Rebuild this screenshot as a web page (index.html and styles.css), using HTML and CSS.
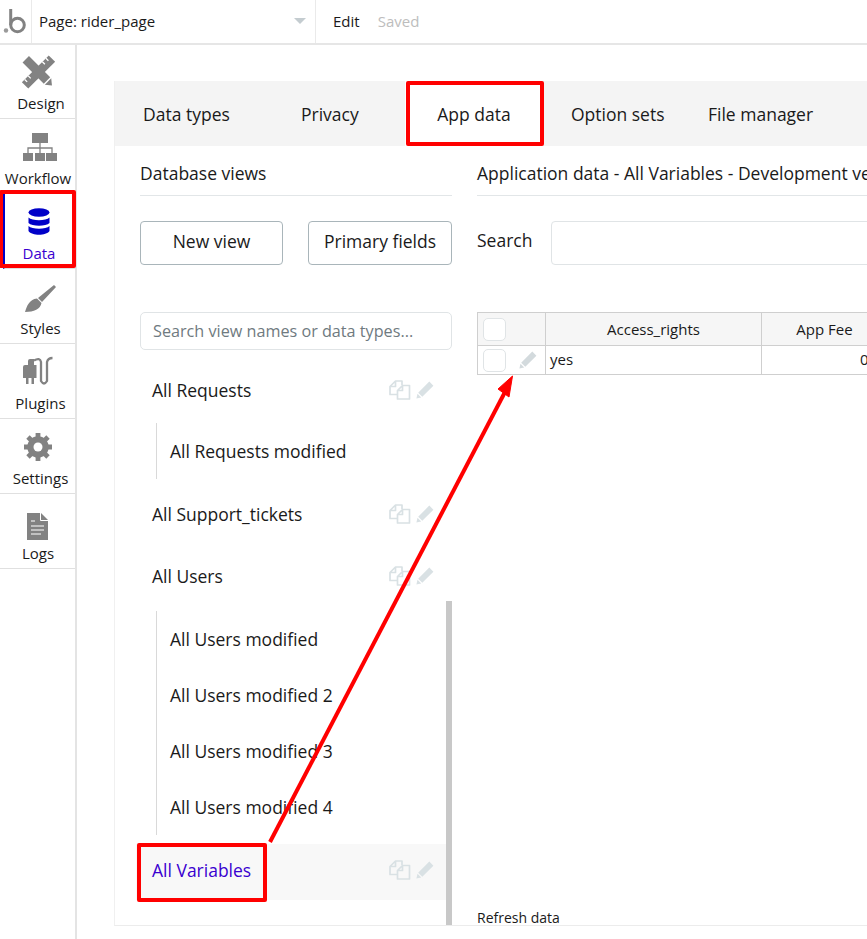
FILE: index.html
```html
<!DOCTYPE html>
<html lang="en">
<head>
<meta charset="utf-8">
<title>Data</title>
<link rel="stylesheet" href="styles.css">
</head>
<body>
<svg width="0" height="0" class="defs">
  <symbol id="pencil" viewBox="0 0 18 18"><path d="M13.300 .6 17.400 4.700 6.300 15.800 2.200 11.700Z M1.500 12.800 5.200 16.500 .4 17.600Z" fill="currentColor"/></symbol>
  <symbol id="copy" viewBox="0 0 22 20"><path d="M8 14.500H1V6.500L6.500 1H13V5 M6.500 1V6.500H1 M13.500 5.500H20.500V19H8.500V10.500Z M13.500 5.500V10.500H8.500" fill="none" stroke="currentColor" stroke-width="1.700" stroke-linejoin="round"/></symbol>
</svg>
<header class="topbar">
  <div class="logo"><svg class="logo-mark" viewBox="0 0 31 43"><circle cx="6" cy="30.500" r="2.200" fill="#9a9a9a"/><circle cx="17.500" cy="25" r="6.800" fill="none" stroke="#828282" stroke-width="3"/><path d="M10.700 9V25" stroke="#828282" stroke-width="3"/></svg></div>
  <div class="page-select"><span>Page: rider_page</span><span class="caret"></span></div>
  <div class="actions"><span class="edit">Edit</span><span class="saved">Saved</span></div>
</header>
<div class="body">
  <nav class="sidebar">
    <div class="nav-item nudge">
      <svg class="nav-icon" viewBox="0 -4 34 32"><g transform="translate(17.500 14) rotate(-45)"><path d="M-19-4.500H19V4.500H-19Z" fill="#828282"/><path d="M-15-4.500V-1M-10-4.500V-1M10-4.500V-1M15-4.500V-1" stroke="#fff" stroke-width="1.300"/></g><g transform="translate(17.500 14) rotate(45)"><path d="M-18-4.500H12V4.500H-18Z" fill="#828282"/><path d="M13.500-4.500 19 0 13.500 4.500Z" fill="#828282"/></g></svg>
      <span>Design</span>
    </div>
    <div class="nav-item">
      <svg class="nav-icon" viewBox="-2 -3 34 32"><path d="M9 1H25V11H9Z M0 21H10V29H0Z M12 21H22V29H12Z M23 21H34V29H23Z" fill="#828282"/><path d="M17 11V21M5 21V16H29V21" fill="none" stroke="#828282" stroke-width="1.300"/></svg>
      <span>Workflow</span>
    </div>
    <div class="nav-item active">
      <svg class="nav-icon" viewBox="2 -4 34 32"><ellipse cx="19" cy="4.500" rx="10.500" ry="4.200" fill="#0000c8"/><path d="M8.500 9.500C12 13 26 13 29.500 9.500V15C26 18.500 12 18.500 8.500 15Z M8.500 18C12 21.500 26 21.500 29.500 18V23C26 28 12 28 8.500 23Z" fill="#0000c8"/></svg>
      <span>Data</span>
    </div>
    <div class="nav-item nudge">
      <svg class="nav-icon" viewBox="0 -6 34 32"><path d="M33 0 35 2 21 17 17 13Z M16 13.500 20.500 18C19.500 24 13 27 4 27 6 21 8 14.500 16 13.500Z" fill="#828282"/></svg>
      <span>Styles</span>
    </div>
    <div class="nav-item nudge">
      <svg class="nav-icon" viewBox="0 -4 34 32"><path d="M4 7H7V3Q7 1 9 1H13V7H15.500V20H13V26H10.500V20H7.500V26H5V20H2V9Q2 7 4 7Z" fill="#828282"/><path d="M13 2.500Q19-1 20 4V23Q23 28 26 23V4Q27 0 31.500 0" fill="none" stroke="#828282" stroke-width="2.300"/></svg>
      <span>Plugins</span>
    </div>
    <div class="nav-item nudge">
      <svg class="nav-icon" viewBox="0 -4 34 32"><circle cx="17" cy="14" r="7.500" fill="none" stroke="#828282" stroke-width="6.500"/><path d="M17 0V28M3 14H31M7 4 27 24M27 4 7 24" stroke="#828282" stroke-width="4.800"/><circle cx="17" cy="14" r="4.500" fill="#fff"/></svg>
      <span>Settings</span>
    </div>
    <div class="nav-item">
      <svg class="nav-icon" viewBox="0 -9 34 32"><path d="M6 0H20L27 7V27H6Z" fill="#828282"/><path d="M10 8H14M10 13H23M10 17H23M10 21H20" stroke="#fff" stroke-width="1.200"/><path d="M19.500 0V7.500H27" fill="none" stroke="#fff" stroke-width="1"/></svg>
      <span>Logs</span>
    </div>
  </nav>
  <main class="main">
    <div class="panel">
      <div class="tabs">
        <span class="tab t-types">Data types</span>
        <span class="tab t-privacy">Privacy</span>
        <span class="tab t-app">App data</span>
        <span class="tab t-sets">Option sets</span>
        <span class="tab t-files">File manager</span>
      </div>
      <div class="content">
        <section class="views">
          <h2 class="heading">Database views</h2>
          <div class="btn-row"><button class="btn new">New view</button><button class="btn prim">Primary fields</button></div>
          <div class="search-views">Search view names or data types...</div>
          <div class="list">
            <div class="row"><span>All Requests</span><span class="row-icons"><svg class="i-copy"><use href="#copy"/></svg><svg class="i-pencil"><use href="#pencil"/></svg></span></div>
            <div class="subs one"><div class="sub">All Requests modified</div></div>
            <div class="row"><span>All Support_tickets</span><span class="row-icons"><svg class="i-copy"><use href="#copy"/></svg><svg class="i-pencil"><use href="#pencil"/></svg></span></div>
            <div class="row"><span>All Users</span><span class="row-icons"><svg class="i-copy"><use href="#copy"/></svg><svg class="i-pencil"><use href="#pencil"/></svg></span></div>
            <div class="subs">
              <div class="sub">All Users modified</div>
              <div class="sub">All Users modified 2</div>
              <div class="sub">All Users modified 3</div>
              <div class="sub">All Users modified 4</div>
            </div>
            <div class="row current"><span>All Variables</span><span class="row-icons"><svg class="i-copy"><use href="#copy"/></svg><svg class="i-pencil"><use href="#pencil"/></svg></span></div>
          </div>
          <div class="scrollbar"></div>
        </section>
        <section class="data">
          <h2 class="heading nowrap">Application data - All Variables - Development version</h2>
          <div class="search-row"><span class="search-label">Search</span><div class="search-input"></div></div>
          <table class="grid">
            <tr class="head"><td class="c0"><span class="check"></span></td><td class="c1">Access_rights</td><td class="c2">App Fee</td></tr>
            <tr><td class="c0"><span class="check"></span><svg class="edit-icon"><use href="#pencil"/></svg></td><td class="c1 left">yes</td><td class="c2 num">0</td></tr>
          </table>
          <div class="refresh">Refresh data</div>
        </section>
      </div>
    </div>
  </main>
</div>
<div class="mark m-data"></div>
<div class="mark m-app"></div>
<div class="mark m-vars"></div>
<svg class="arrow" viewBox="0 0 867 939"><path d="M270 842 505 392" stroke="#f00" stroke-width="4" fill="none"/><path d="M512.500 376 498 389 509 397Z" fill="#f00" stroke="#f00" stroke-width="1"/></svg>
</body>
</html>
```
FILE: styles.css
```css
* { box-sizing: border-box; }
html, body { margin: 0; height: 939px; overflow: hidden; }
body { font-family: "Open Sans", sans-serif; color: #1a1a1a; background: #fff; font-size: 17.5px; width: 867px; position: relative; }
.defs { position: absolute; }
.topbar { height: 45px; display: flex; border-bottom: 2px solid #e6e6e6; align-items: stretch; font-size: 15px; }
.logo { width: 32px; border-right: 1px solid #eaeaea; }
.logo-mark { display: block; width: 31px; height: 43px; }
.page-select { width: 284px; border-right: 1px solid #eaeaea; display: flex; align-items: center; justify-content: space-between; padding: 0 9px 2px 7px; }
.caret { width: 0; height: 0; border: 6px solid transparent; border-top: 6px solid #c4ccd0; border-bottom: 0; }
.actions { display: flex; align-items: center; padding: 0 0 2px 17px; gap: 18px; }
.saved { color: #bdbdbd; }
.body { display: flex; height: 894px; }
.sidebar { width: 77px; border-right: 2px solid #e4e4e4; flex: none; }
.nav-item { height: 75px; border-bottom: 1px solid #e0e0e0; display: flex; flex-direction: column; align-items: center; font-size: 15px; padding-top: 10px; padding-left: 1px; line-height: 20px; }
.nav-item:first-child { height: 74px; padding-top: 9px; }
.nudge span { margin-left: 5px; }
.nav-item:first-child span { margin-left: 6px; }
.nav-icon { width: 34px; height: 32px; margin-bottom: 7px; overflow: visible; flex: none; }
.nav-item.active { color: #3a00d0; margin-left: 3px; border-left: 2px solid #0000c8; padding-left: 0; padding-right: 2px; }
.main { flex: 1; padding: 36px 0 0 37px; min-width: 0; }
.panel { width: 753px; height: 845px; border-left: 1px solid #f0f0f0; border-bottom: 1px solid #ececec; position: relative; overflow: hidden; }
.tabs { height: 65px; background: #f4f4f4; position: relative; }
.tab { position: absolute; top: 0; height: 65px; line-height: 67px; white-space: nowrap; }
.t-types { left: 28px; } .t-privacy { left: 186px; }
.t-app { left: 290px; width: 138px; background: #fff; text-align: center; }
.t-sets { left: 456px; } .t-files { left: 593px; }
.content { display: flex; }
.views { width: 312px; margin: 0 25px; position: relative; height: 780px; flex: none; }
.heading { margin: 0; height: 50px; padding-top: 15px; font-size: 17.500px; font-weight: 400; line-height: 25px; border-bottom: 1px solid #e2e6e8; white-space: nowrap; }
.btn-row { display: flex; justify-content: space-between; margin-top: 25px; }
.btn { height: 44px; background: #fff; border: 1px solid #a9b5ba; border-radius: 4px; font: inherit; color: inherit; padding: 0 0 5px; }
.new { width: 143px; } .prim { width: 144px; }
.search-views { margin-top: 47px; height: 38px; border: 1px solid #e0e4e6; border-radius: 5px; color: #6f7a80; font-size: 16.200px; line-height: 36px; padding-left: 12px; white-space: nowrap; }
.list { margin-top: 9px; width: 305px; }
.row { height: 62px; display: flex; align-items: center; justify-content: space-between; padding: 0 12px 0 16px; margin: 0 -1px 0 -4px; }
.row > span:first-child { padding-bottom: 1px; }
.row-icons { display: flex; gap: 5px; color: #d9e1e4; align-items: center; }
.i-copy { width: 22px; height: 20px; }
.i-pencil { width: 18px; height: 18px; }
.subs { margin: 4px 0 0 16px; border-left: 1px solid #d9d9d9; padding-left: 13px; }
.subs.one { margin: 2px 0 4px 16px; }
.sub { height: 56px; line-height: 56px; }
.row.current { color: #3a00d0; background: #f8f8f8; height: 56px; margin-top: 9px; padding-bottom: 4px; }
.scrollbar { position: absolute; left: 306px; top: 455px; width: 6px; height: 330px; background: #c8c8c8; }
.data { flex: 1; min-width: 0; position: relative; }
.search-row { display: flex; align-items: center; margin-top: 25px; gap: 19px; }
.search-label { padding-bottom: 7px; }
.search-input { width: 340px; height: 44px; border: 1px solid #e0e4e6; border-radius: 4px; flex: none; }
.grid { border-collapse: collapse; margin-top: 47px; font-size: 15px; table-layout: fixed; width: 410px; }
.grid td { border: 1px solid #cfcfcf; padding: 0; text-align: center; position: relative; }
.head td { background: #f6f6f6; height: 33px; }
.grid tr:not(.head) td { height: 29px; padding-bottom: 2px; }
.c0 { width: 68px; } .c1 { width: 216px; } .c2 { width: 126px; }
.grid .left { text-align: left; padding-left: 4px; }
.grid .num { text-align: left; padding-left: 98px; }
.check { position: absolute; left: 5px; top: 50%; margin-top: -11.500px; width: 23px; height: 23px; border: 1px solid #e0e4e6; border-radius: 5px; background: #fff; }
.edit-icon { position: absolute; left: 41px; top: 5px; width: 18px; height: 18px; color: #d3dadd; }
.refresh { position: absolute; left: 0; top: 762px; font-size: 14px; line-height: 20px; }
.mark { position: absolute; border: 4px solid #f00; border-radius: 2px; }
.m-data { left: -1px; top: 190px; width: 77px; height: 78px; }
.m-app { left: 406px; top: 81px; width: 138px; height: 65px; }
.m-vars { left: 137px; top: 843px; width: 130px; height: 59px; }
.arrow { position: absolute; left: 0; top: 0; width: 867px; height: 939px; pointer-events: none; }
```
